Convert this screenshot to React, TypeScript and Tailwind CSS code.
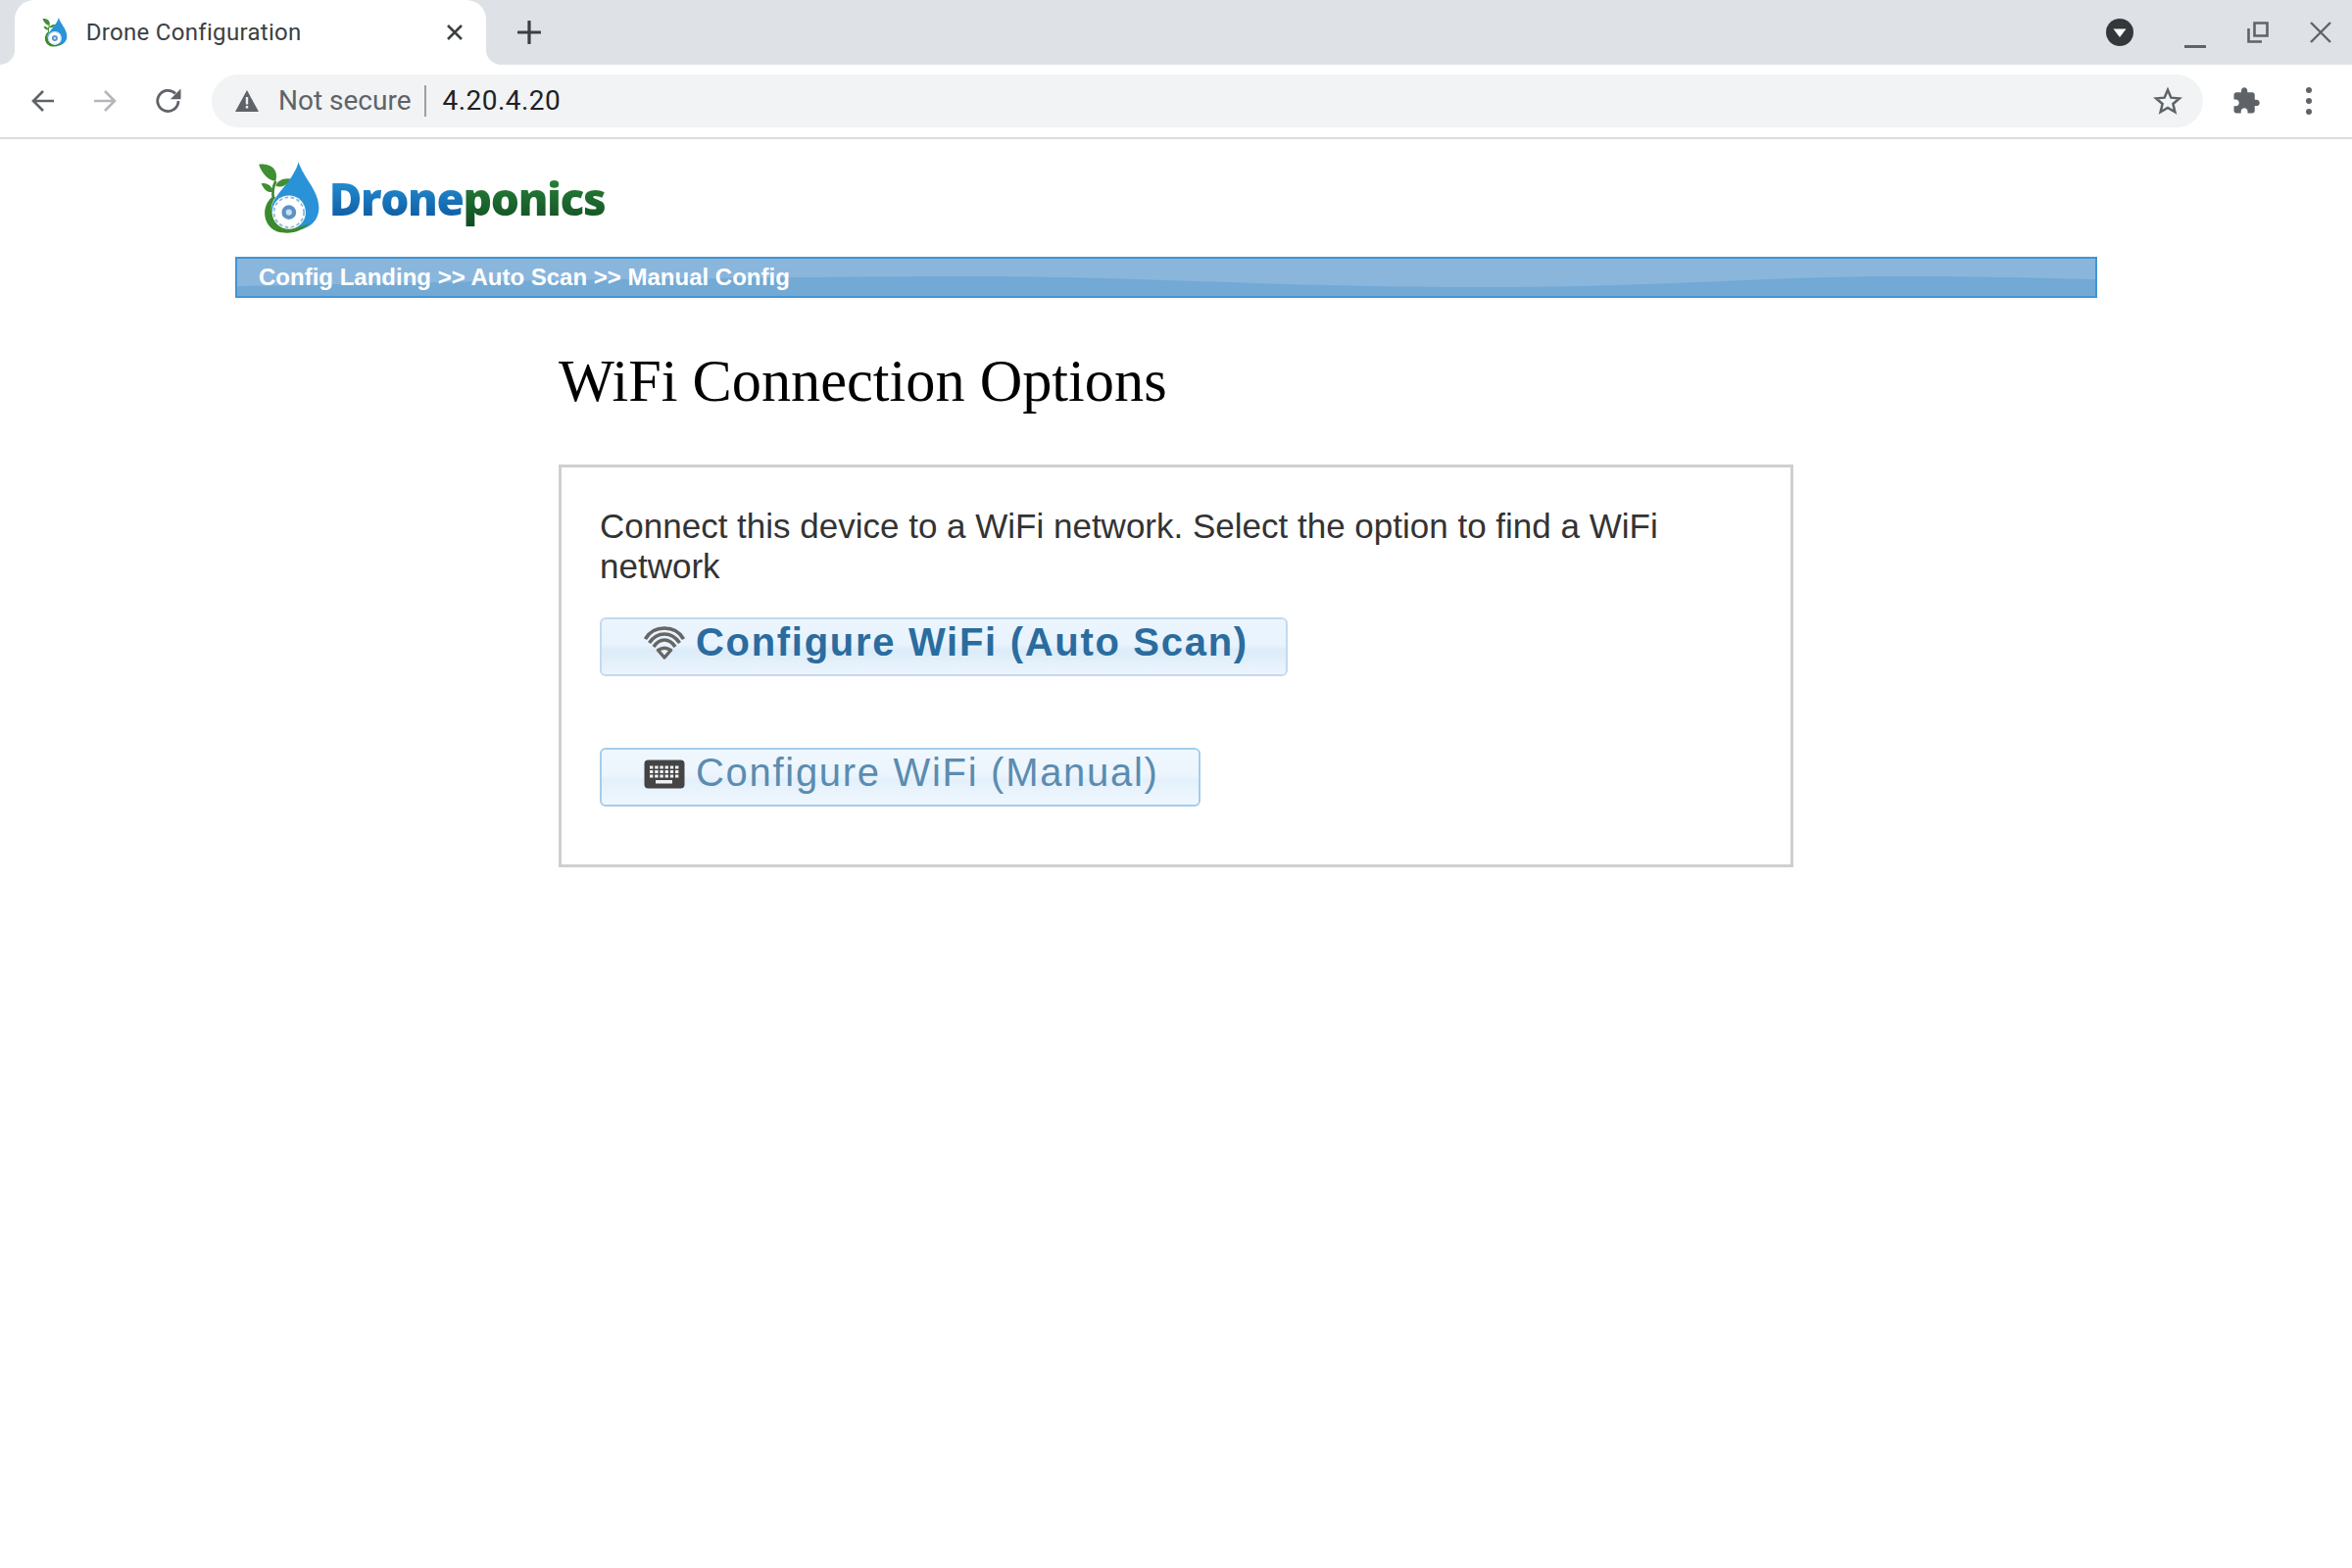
import React from 'react'

const Favicon = ({ size }: { size: number }) => (
  <svg width={size * 0.86} height={size} viewBox="0 0 52 60" className="shrink-0">
    <path d="M34 0 C38 13 51 24 51 38 C51 50 42 57 29 57 C17 57 9 47 12 36 C15 26 30 15 34 0Z" fill="#2a93d8" />
    <path d="M11 30 C3 38 4 53 16 58 C27 61 37 58 43 51 C34 56 22 56 15 49 C10 43 10 36 15 29Z" fill="#3c8a2e" />
    <circle cx="26" cy="42" r="14" fill="#fff" />
    <circle cx="26" cy="42" r="12.5" fill="none" stroke="#8fbbdc" strokeWidth="1.5" strokeDasharray="3 2" />
    <circle cx="26" cy="42" r="6" fill="#5a93c6" />
    <circle cx="26" cy="42" r="2.5" fill="#c9dff0" />
    <path d="M13 31 C12 25 13 20 15 16" fill="none" stroke="#3c8a2e" strokeWidth="2.2" />
    <path d="M15 16 C8 15 3 9 1 2 C9 1 18 5 15 16Z" fill="#3f8f33" />
    <path d="M13 25 C8 26 5 23 3 18 C8 17 12 20 13 25Z" fill="#3f8f33" />
    <path d="M15 20 C16 16 21 13 27 14 C25 19 20 22 15 20Z" fill="#3f8f33" />
  </svg>
)

const WifiIcon = () => (
  <svg width="42" height="34" viewBox="0 0 42 34" className="shrink-0">
    <g fill="none" stroke="#666666" strokeWidth="3.6">
      <path d="M1.5 13 C6 5 14 2 21 2 C28 2 36 5 40.5 13" />
      <path d="M5.5 17 C10 10.5 15 8 21 8 C27 8 32 10.5 36.5 17" />
      <path d="M10 21 C13 16.5 17 14 21 14 C25 14 29 16.5 32 21" />
    </g>
    <path d="M14.5 24.5 Q21 20 27.5 24.5 L21 32Z" fill="#e8f2fc" stroke="#666666" strokeWidth="3.4" strokeLinejoin="round" />
  </svg>
)

const KeyboardIcon = () => (
  <svg width="42" height="30" viewBox="0 0 42 30" className="shrink-0">
    <rect x="0.5" y="0.5" width="41" height="29" rx="4" fill="#444444" />
    <g fill="#eef1f4">
      {[6, 11.2, 16.4, 21.6, 26.8, 32].map((x) => (
        <React.Fragment key={x}>
          <rect x={x} y="6.5" width="3.4" height="3" />
          <rect x={x} y="11" width="3.4" height="3" />
          <rect x={x} y="15.5" width="3.4" height="3" />
        </React.Fragment>
      ))}
      <rect x="12" y="21" width="17" height="3.5" />
    </g>
  </svg>
)

const TabBar = () => (
  <div className="flex h-[66px] bg-[#dee1e6]">
    <div className="w-[15px] h-[15px] self-end bg-white shrink-0">
      <div className="w-full h-full bg-[#dee1e6] rounded-br-[15px]" />
    </div>
    <div className="w-[481px] h-full bg-white rounded-t-[20px] flex items-center pl-[28px] pr-[23px] shrink-0">
      <Favicon size={30} />
      <span className="ml-[19px] text-[24px] tracking-[0.3px] text-[#3c4043] font-['Roboto',sans-serif] flex-1">Drone Configuration</span>
      <svg width="18" height="18" viewBox="0 0 18 18">
        <path d="M2 2 L16 16 M16 2 L2 16" stroke="#3c4043" strokeWidth="2.6" />
      </svg>
    </div>
    <div className="w-[15px] h-[15px] self-end bg-white shrink-0">
      <div className="w-full h-full bg-[#dee1e6] rounded-bl-[15px]" />
    </div>
    <div className="ml-[17px] flex items-center">
      <svg width="24" height="24" viewBox="0 0 24 24">
        <path d="M12 1 V23 M1 12 H23" stroke="#3c4043" strokeWidth="3.2" strokeLinecap="round" />
      </svg>
    </div>
    <div className="flex-1" />
    <div className="flex items-center pr-[21px]">
      <svg width="28" height="28" viewBox="0 0 28 28">
        <circle cx="14" cy="14" r="14" fill="#35383b" />
        <path d="M7.5 10.5 H20.5 L14 19Z" fill="#fff" />
      </svg>
      <div className="ml-[52px] w-[22px] h-[3px] mt-[28px] bg-[#5f6368]" />
      <svg width="22" height="22" viewBox="0 0 22 22" className="ml-[42px] mb-[1px]">
        <path d="M7.5 1.5 H20.5 V14.5 H7.5Z M1.5 7 V20.5 H15" fill="none" stroke="#5f6368" strokeWidth="2.6" />
      </svg>
      <svg width="22" height="22" viewBox="0 0 22 22" className="ml-[42px]">
        <path d="M1 1 L21 21 M21 1 L1 21" stroke="#5f6368" strokeWidth="2.4" />
      </svg>
    </div>
  </div>
)

const ToolBar = () => (
  <div className="flex items-center h-[76px] bg-white border-b-2 border-[#dadce0] box-border">
    <div className="flex items-center w-[216px] pl-[32px] shrink-0">
      <svg width="24" height="24" viewBox="0 0 24 24">
        <path d="M23 12 H3 M12 2 L2 12 L12 22" fill="none" stroke="#5f6368" strokeWidth="2.6" />
      </svg>
      <svg width="24" height="24" viewBox="0 0 24 24" className="ml-[39px]">
        <path d="M1 12 H21 M12 2 L22 12 L12 22" fill="none" stroke="#b4b6b9" strokeWidth="2.6" />
      </svg>
      <svg width="30" height="30" viewBox="0 0 24 24" className="ml-[38px]">
        <path d="M20 12 A8.5 8.5 0 1 1 17.6 6" fill="none" stroke="#5f6368" strokeWidth="2.2" />
        <path d="M22 2 V10.5 H13.5Z" fill="#5f6368" />
      </svg>
    </div>
    <div className="flex items-center w-[2032px] h-[54px] bg-[#f1f3f4] rounded-full pl-[24px] pr-[21px] shrink-0 font-['Roboto',sans-serif] text-[28px]">
      <svg width="24" height="22" viewBox="0 0 24 22">
        <path d="M12 0 L24 22 H0Z" fill="#5f6368" />
        <path d="M10.8 7 H13.2 V14.5 H10.8Z M10.8 16 H13.2 V18.5 H10.8Z" fill="#f1f3f4" />
      </svg>
      <span className="ml-[20px] text-[#5f6368]">Not secure</span>
      <div className="ml-[13px] w-[2px] h-[32px] bg-[#9aa0a6]" />
      <span className="ml-[17px] text-[#202124] tracking-[0.45px]">4.20.4.20</span>
      <div className="flex-1" />
      <svg width="30" height="30" viewBox="0 0 24 24">
        <path d="M12 3 L14.7 9.3 L21.5 9.9 L16.3 14.4 L17.9 21 L12 17.5 L6.1 21 L7.7 14.4 L2.5 9.9 L9.3 9.3Z" fill="none" stroke="#5f6368" strokeWidth="2" />
      </svg>
    </div>
    <svg width="30" height="30" viewBox="0 0 24 24" className="ml-[29px]">
      <path d="M20.5 11 H19 V7 C19 5.9 18.1 5 17 5 H13 V3.5 C13 2.1 11.9 1 10.5 1 S8 2.1 8 3.5 V5 H4 C2.9 5 2 5.9 2 7 V10.8 H3.5 C5 10.8 6.2 12 6.2 13.5 S5 16.2 3.5 16.2 H2 V20 C2 21.1 2.9 22 4 22 H7.8 V20.5 C7.8 19 9 17.8 10.5 17.8 S13.2 19 13.2 20.5 V22 H17 C18.1 22 19 21.1 19 20 V16 H20.5 C21.9 16 23 14.9 23 13.5 S21.9 11 20.5 11Z" fill="#5f6368" />
    </svg>
    <div className="ml-[46px] flex flex-col gap-[5px]">
      <div className="w-[6px] h-[6px] rounded-full bg-[#5f6368]" />
      <div className="w-[6px] h-[6px] rounded-full bg-[#5f6368]" />
      <div className="w-[6px] h-[6px] rounded-full bg-[#5f6368]" />
    </div>
  </div>
)

const Logo = () => (
  <div className="flex items-center h-[120px] pl-[23px]">
    <Favicon size={74} />
    <span className="ml-[9px] mt-[4px] pb-[5px] text-[46px] font-extrabold leading-none tracking-[-1.4px] font-['Open_Sans',sans-serif]">
      <span className="text-transparent bg-clip-text bg-gradient-to-b from-[#2ba0e4] to-[#0c4f96]">Drone</span>
      <span className="text-transparent bg-clip-text bg-gradient-to-b from-[#2f8f3e] to-[#0f4a22]">ponics</span>
    </span>
  </div>
)

const CrumbBar = () => (
  <div className="relative w-[1900px] h-[42px] border-2 border-[#4295d4] bg-[#8ab6dc] flex items-center pl-[22px] overflow-hidden">
    <svg viewBox="0 0 1896 38" preserveAspectRatio="none" className="absolute inset-0 w-full h-full">
      <path d="M0 28 C200 24 400 20 710 18 C900 17 1000 27 1250 29 C1450 30 1550 18 1700 18 C1800 18 1850 20 1896 21 V38 H0Z" fill="#72a9d5" />
    </svg>
    <span className="relative text-white font-bold text-[24px] font-['Liberation_Sans',sans-serif]">Config Landing &gt;&gt; Auto Scan &gt;&gt; Manual Config</span>
  </div>
)

type ButtonProps = {
  label: string,
  width: string,
  icon: React.ReactNode,
  primary?: boolean
}

const WifiButton: React.FC<ButtonProps> = ({ label, width, icon, primary }) => (
  <button
    className={`${width} h-[60px] flex items-start pl-[43px] pt-[1px] rounded-[6px] border-2 text-[40px] leading-[44px] tracking-[1.7px] font-['Liberation_Sans',sans-serif] ${primary ? 'bg-[linear-gradient(#ecf5fe_0%,#e8f3fd_46%,#dcecf9_56%,#e4f0fb_78%,#ecf5fe_100%)] border-[#c3daee] text-[#2b6c9f] font-bold' : 'bg-[linear-gradient(#f0f7fe_0%,#ecf5fd_46%,#e3f0fb_56%,#eaf4fd_78%,#f0f7fe_100%)] border-[#a3cdec] text-[#5b8cb0]'}`}
  >
    <span className={`mr-[11px] ${primary ? 'mt-[6px]' : 'mt-[9px]'}`}>{icon}</span>
    {label}
  </button>
)

const App = () => {
  return (
    <div className="min-h-[1600px] bg-white">
      <TabBar />
      <ToolBar />
      <div className="px-[240px]">
        <Logo />
        <CrumbBar />
        <div className="ml-[330px] w-[1260px]">
          <h1 className="mt-[45px] text-[60.3px] leading-[80px] text-black font-['Liberation_Serif',serif]">WiFi Connection Options</h1>
          <div className="mt-[45px] h-[411px] border-[3px] border-[#cfcfcf] box-border pl-[39px] pr-[39px] pt-[39px]">
            <p className="text-[35px] leading-[41px] text-[#333] font-['Liberation_Sans',sans-serif]">
              Connect this device to a WiFi network. Select the option to find a WiFi network
            </p>
            <div className="mt-[32px] flex flex-col gap-[73px]">
              <WifiButton label="Configure WiFi (Auto Scan)" width="w-[702px]" icon={<WifiIcon />} primary />
              <WifiButton label="Configure WiFi (Manual)" width="w-[613px]" icon={<KeyboardIcon />} />
            </div>
          </div>
        </div>
      </div>
    </div>
  )
}

export default App
